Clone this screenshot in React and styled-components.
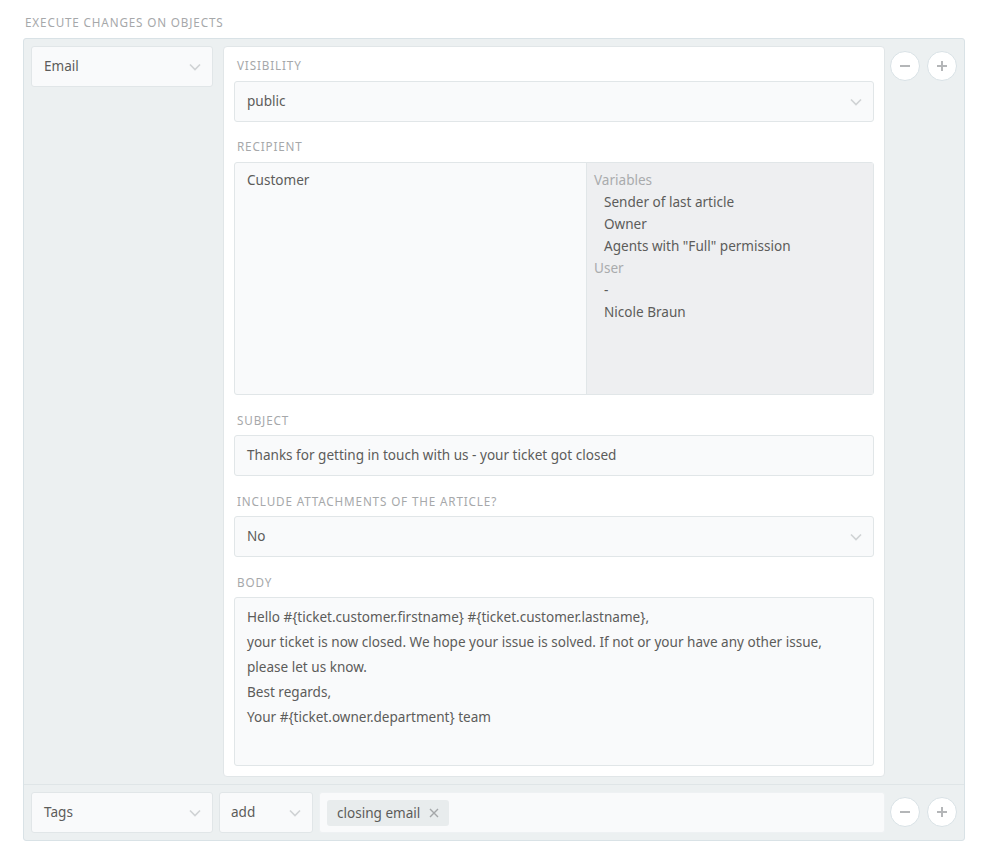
import React from 'react';
import styled, { createGlobalStyle } from 'styled-components';

const GlobalStyle = createGlobalStyle`
	html, body {
		margin: 0;
		background: #fff;
		font-family: 'Noto Sans', 'Open Sans', sans-serif;
		font-size: 13.55px;
		color: #5c5c5a;
	}
	* {
		box-sizing: border-box;
	}
`;

const Page = styled.div`
	width: 988px;
	height: 857px;
	padding: 14px 23px 0 23px;
`;

const Heading = styled.div`
	height: 16px;
	line-height: 16px;
	padding-left: 2px;
	margin-bottom: 8px;
	font-size: 11.7px;
	letter-spacing: 0.85px;
	text-transform: uppercase;
	color: #a6a8aa;
`;

const Panel = styled.div`
	width: 942px;
	background: #ecf0f1;
	border: 1px solid #d9e2e6;
	border-radius: 3px;
`;

const Row = styled.div`
	display: flex;
	align-items: flex-start;
	padding: 7px;
	& + & {
		border-top: 1px solid #dfe5e7;
	}
`;

const Select = styled.div`
	display: flex;
	align-items: center;
	justify-content: space-between;
	flex: ${(p) => (p.$width ? `0 0 ${p.$width}px` : '1')};
	height: 41px;
	padding: 0 11.5px 2px ${(p) => p.$inset || 12}px;
	margin-right: ${(p) => p.$gap || 0}px;
	background: #f9fafb;
	border: 1px solid #e1e6e8;
	border-radius: 3px;
`;

const ChevronIcon = styled.svg`
	margin-top: 2px;
`;

const Chevron = () => (
	<ChevronIcon width='12' height='8' viewBox='0 0 12 8' fill='none'>
		<path d='M1 1.5 L6 6.5 L11 1.5' stroke='#d0d3d5' strokeWidth='1.7' />
	</ChevronIcon>
);

const Config = styled.div`
	flex: 0 0 662px;
	padding: 10px;
	background: #fff;
	border: 1px solid #e1e6e8;
	border-radius: 4px;
`;

const Group = styled.div`
	& + & {
		margin-top: 16px;
	}
`;

const Label = styled.div`
	height: 16px;
	line-height: 16px;
	padding: ${(p) => (p.$low ? '1px' : '0')} 0 0 3px;
	margin-bottom: 8px;
	font-size: 11.7px;
	letter-spacing: 0.85px;
	text-transform: uppercase;
	color: #a6a8aa;
`;

const Input = styled.div`
	height: 41px;
	line-height: 39px;
	padding: 0 12px;
	background: #f9fafb;
	border: 1px solid #e1e6e8;
	border-radius: 3px;
`;

const Recipient = styled.div`
	display: flex;
	height: 233px;
	background: #f9fafb;
	border: 1px solid #e1e6e8;
	border-radius: 3px;
	line-height: 22px;
`;

const Picked = styled.div`
	flex: 0 0 352px;
	padding: 6px 12px;
	border-right: 1px solid #e1e6e8;
`;

const Options = styled.div`
	flex: 1;
	padding: 6px 7px;
	background: #eeeff1;
`;

const OptionTitle = styled.div`
	color: #a9abad;
`;

const Option = styled.div`
	padding-left: 10px;
`;

const Body = styled.div`
	height: 169px;
	padding: 7px 12px;
	line-height: 25px;
	background: #f9fafb;
	border: 1px solid #e1e6e8;
	border-radius: 3px;
`;

const Actions = styled.div`
	display: flex;
	align-items: center;
	flex: 0 0 72px;
	gap: 7px;
	height: 40px;
	padding-left: 5px;
`;

const RoundButton = styled.div`
	display: flex;
	align-items: center;
	justify-content: center;
	width: 30px;
	height: 30px;
	background: #fff;
	border: 1px solid #d9e2e6;
	border-radius: 50%;
`;

const Minus = () => (
	<svg width='12' height='12' viewBox='0 0 12 12'>
		<path d='M1 6 H11' stroke='#b4b6b8' strokeWidth='2' />
	</svg>
);

const Plus = () => (
	<svg width='12' height='12' viewBox='0 0 12 12'>
		<path d='M1 6 H11 M6 1 V11' stroke='#b4b6b8' strokeWidth='2' />
	</svg>
);

const TagInput = styled.div`
	display: flex;
	align-items: center;
	flex: 0 0 566px;
	height: 41px;
	padding-left: 7px;
	background: #f9fafb;
	border: 1px solid #eef1f3;
	border-radius: 3px;
`;

const Tag = styled.div`
	display: flex;
	align-items: center;
	gap: 9px;
	height: 26px;
	padding: 0 10px;
	background: #e8eced;
	border-radius: 3px;
`;

const Close = () => (
	<svg width='10' height='10' viewBox='0 0 10 10'>
		<path d='M1 1 L9 9 M9 1 L1 9' stroke='#a4a7a9' strokeWidth='1.4' />
	</svg>
);

const Buttons = () => (
	<Actions>
		<RoundButton>
			<Minus />
		</RoundButton>
		<RoundButton>
			<Plus />
		</RoundButton>
	</Actions>
);

const App = () => (
	<Page>
		<GlobalStyle />
		<Heading>Execute changes on objects</Heading>
		<Panel>
			<Row>
				<Select $width={182} $gap={10}>
					Email
					<Chevron />
				</Select>
				<Config>
					<Group>
						<Label>Visibility</Label>
						<Select>
							public
							<Chevron />
						</Select>
					</Group>
					<Group>
						<Label>Recipient</Label>
						<Recipient>
							<Picked>Customer</Picked>
							<Options>
								<OptionTitle>Variables</OptionTitle>
								<Option>Sender of last article</Option>
								<Option>Owner</Option>
								<Option>Agents with "Full" permission</Option>
								<OptionTitle>User</OptionTitle>
								<Option>-</Option>
								<Option>Nicole Braun</Option>
							</Options>
						</Recipient>
					</Group>
					<Group>
						<Label $low>Subject</Label>
						<Input>Thanks for getting in touch with us - your ticket got closed</Input>
					</Group>
					<Group>
						<Label $low>Include attachments of the article?</Label>
						<Select>
							No
							<Chevron />
						</Select>
					</Group>
					<Group>
						<Label $low>Body</Label>
						<Body>
							<div>Hello #{'{'}ticket.customer.firstname{'}'} #{'{'}ticket.customer.lastname{'}'},</div>
							<div>your ticket is now closed. We hope your issue is solved. If not or your have any other issue,</div>
							<div>please let us know.</div>
							<div>Best regards,</div>
							<div>Your #{'{'}ticket.owner.department{'}'} team</div>
						</Body>
					</Group>
				</Config>
				<Buttons />
			</Row>
			<Row>
				<Select $width={182} $gap={6}>
					Tags
					<Chevron />
				</Select>
				<Select $width={94} $gap={6} $inset={11}>
					add
					<Chevron />
				</Select>
				<TagInput>
					<Tag>
						closing email
						<Close />
					</Tag>
				</TagInput>
				<Buttons />
			</Row>
		</Panel>
	</Page>
);

export default App;
